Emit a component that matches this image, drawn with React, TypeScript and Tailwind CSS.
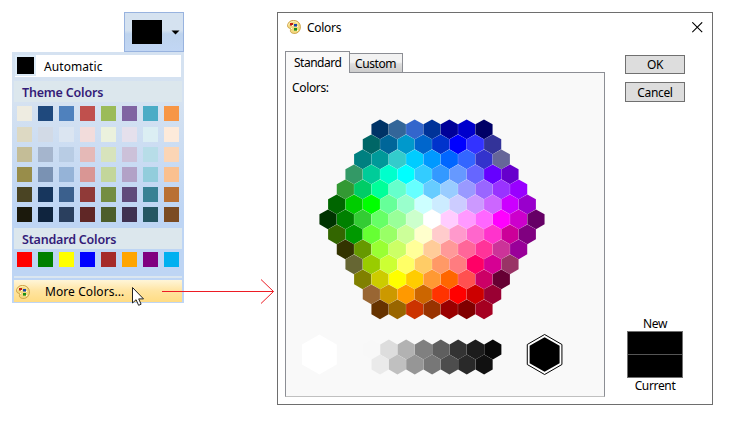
import React from 'react';

const THEME: string[][] = [
  ['#eeece1', '#1f497d', '#4f81bd', '#c0504d', '#9bbb59', '#8064a2', '#4bacc6', '#f79646'],
  ['#ddd9c3', '#d2dae6', '#dbe5f1', '#f2dcdb', '#ebf1dd', '#e5e0ec', '#dbeef3', '#fdeada'],
  ['#c4bd97', '#a5b5cd', '#b8cce4', '#e5b9b7', '#d7e3bc', '#ccc1d9', '#b7dde8', '#fbd5b5'],
  ['#988d4a', '#7a92b3', '#95b3d7', '#d99694', '#c3d69b', '#b2a2c7', '#92cddc', '#fac08f'],
  ['#4a4423', '#17365d', '#3b608d', '#903a38', '#748d42', '#604a7b', '#388194', '#b97034'],
  ['#1b190c', '#0f243e', '#2a3f5e', '#602726', '#4d5e2c', '#403152', '#255663', '#7b4b23'],
];

const STANDARD = ['#ff0000', '#008000', '#ffff00', '#0000ff', '#a52a2a', '#ffa500', '#800080', '#00b0f0'];

const HONEYCOMB = [
  '003366 336699 3366cc 003399 000099 0000cc 000066',
  '006666 006699 0099cc 0066cc 0033cc 0000ff 3333ff 333399',
  '008080 009999 33cccc 00ccff 0099ff 0066ff 3366ff 3333cc 666699',
  '339966 00cc99 00ffcc 00ffff 33ccff 3399ff 6699ff 6666ff 6600ff 6600cc',
  '339933 00cc66 00ff99 66ffcc 66ffff 66ccff 99ccff 9999ff 9966ff 9933ff 9900ff',
  '006600 00cc00 00ff00 66ff99 99ffcc ccffff ccecff ccccff cc99ff cc66ff cc00ff 9900cc',
  '003300 008000 33cc33 66ff66 99ff99 ccffcc ffffff ffccff ff99ff ff66ff ff00ff cc00cc 660066',
  '336600 009900 66ff33 99ff66 ccff99 ffffcc ffcccc ff99cc ff66cc ff33cc cc0099 800080',
  '333300 669900 99ff33 ccff66 ffff99 ffcc99 ff9999 ff6699 ff3399 cc3399 990099',
  '666633 99cc00 ccff33 ffff66 ffcc66 ff9966 ff7c80 ff0066 d60093 993366',
  '808000 cccc00 ffff00 ffcc00 ff9933 ff6600 ff5050 cc0066 660033',
  '996633 cc9900 ff9900 cc6600 ff3300 ff0000 cc0000 990033',
  '663300 996600 cc3300 993300 990000 800000 a50021',
].map((row) => row.split(' '));

const GRAYS = [
  'f8f8f8 dddddd b2b2b2 808080 5f5f5f 333333 1c1c1c 080808',
  'eaeaea c0c0c0 969696 777777 4d4d4d 292929 111111',
].map((row) => row.split(' '));

const PITCH = 17.33;

function hex(cx: number, cy: number, r: number) {
  const w = r * 0.8667;
  return [
    [cx, cy - r],
    [cx + w, cy - r / 2],
    [cx + w, cy + r / 2],
    [cx, cy + r],
    [cx - w, cy + r / 2],
    [cx - w, cy - r / 2],
  ]
    .map((p) => p.map((n) => n.toFixed(2)).join(','))
    .join(' ');
}

function Cells({ rows, cx, cy }: { rows: string[][]; cx: number[]; cy: number }) {
  return (
    <>
      {rows.map((row, r) =>
        row.map((c, i) => (
          <polygon key={`${r}-${i}`} points={hex(cx[r] + i * PITCH, cy + r * 15, 9.9)} fill={`#${c}`} />
        )),
      )}
    </>
  );
}

function Palette({ className }: { className: string }) {
  return (
    <svg viewBox="0 0 14 14" className={className}>
      <path
        d="M4.500.6C7-.1 10 .6 11.800 2.600c1.900 2.200 2.100 5.400.8 7.800-1.200 2.300-3.700 3.400-6.200 3-1.800-.3-3.200-1.300-3-2.700.1-1 .7-1.600.2-2C3 8.200 1.300 8.300.7 6.700 0 4.500 1.900 1.300 4.500.6Z"
        fill="#f3d97f"
        stroke="#c4963a"
        strokeWidth="0.8"
      />
      <path d="M1.500 5.500C1.700 3.400 3.500 1.700 6 1.600c2-.1 3.800.6 5 2" fill="none" stroke="#fff0b8" strokeWidth="1" />
      <rect x="3" y="3" width="3" height="2.500" fill="#c01f16" />
      <rect x="7" y="4" width="3" height="2.500" fill="#1844ac" />
      <rect x="7" y="8" width="3" height="2.600" fill="#1d8f16" />
      <path d="M5 5h1v1H5zM4 8h1v1H4z" fill="#fffbe6" />
      <path d="M10 6h1v1h-1zM10 10h1v1h-1z" fill="#fffbe6" />
    </svg>
  );
}

function Swatches({ colors }: { colors: string[] }) {
  return (
    <div className="flex gap-[6px] pl-[5px]">
      {colors.map((c) => (
        <div key={c} className="h-[15px] w-[15px]" style={{ backgroundColor: c }} />
      ))}
    </div>
  );
}

function Heading({ children }: { children: React.ReactNode }) {
  return (
    <div className="mx-[2px] h-[21px] bg-[#dce7ed] pl-2 text-[12.5px] leading-[24px] font-semibold tracking-[-0.2px] text-[#341c78]">
      {children}
    </div>
  );
}

function ColorMenu() {
  return (
    <div className="flex w-[172px] flex-col pt-3">
      <div className="flex h-10 w-[60px] items-center self-end border border-[#98b3df] bg-linear-to-b from-[#d5e2f0] from-45% via-[#bed3ed] via-55% to-[#c1d6f4] pl-[7px]">
        <div className="h-6 w-[30px] bg-black" />
        <svg className="ml-[9px] h-[5px] w-[9px]" viewBox="0 0 9 5">
          <path d="M.5.500h8l-4 4Z" fill="#000" />
        </svg>
      </div>
      <div className="flex h-[251px] flex-col bg-linear-to-b from-[#d5e2f1] from-20% to-[#bed5f4] to-65%">
        <div className="mx-[3px] mt-[3px] flex h-[22px] bg-white">
          <div className="h-[21px] w-[21px] bg-[#dcebf8] pt-[2px] pl-[2px]">
            <div className="h-[17px] w-[17px] bg-black" />
          </div>
          <span className="pl-2 leading-[24px] tracking-[0.08px]">Automatic</span>
        </div>
        <div className="pt-1">
          <Heading>Theme Colors</Heading>
        </div>
        <div className="pt-1">
          <Swatches colors={THEME[0]} />
        </div>
        <div className="flex flex-col gap-[5px] pt-[6px]">
          {THEME.slice(1).map((row) => (
            <Swatches key={row[0]} colors={row} />
          ))}
        </div>
        <div className="pt-[6px] pb-[3px]">
          <Heading>Standard Colors</Heading>
        </div>
        <Swatches colors={STANDARD} />
        <div className="mx-[2px] mt-[9px] h-[2px] bg-[#dae6f0]" />
        <div className="mx-[2px] mt-[2px] flex h-[22px] items-start bg-linear-to-b from-[#fff5d8] via-[#ffe4a0] via-50% to-[#ffdc83] pl-[2px]">
          <Palette className="mt-[5px] h-[14px] w-[14px]" />
          <span className="pl-[15px] leading-[24px] tracking-[0.08px]">More Colors...</span>
        </div>
      </div>
    </div>
  );
}

function StandardPane() {
  return (
    <div className="flex h-[325px] w-[320px] flex-col border border-[#8c8e94] border-b-[#c0c0c0] bg-[#f9f9f9]">
      <div className="pt-[7px] pl-[6px] leading-4 tracking-[-0.35px]">Colors:</div>
      <svg className="h-[300px] w-[318px]" viewBox="286 96 318 300">
        <Cells rows={HONEYCOMB} cx={HONEYCOMB.map((r) => 432 - ((r.length - 1) * PITCH) / 2)} cy={129.3} />
        <Cells rows={GRAYS} cx={[371.5, 380.1]} cy={349.5} />
        <polygon points={hex(319.4, 354.5, 20)} fill="#fff" />
        <polygon points={hex(544.6, 354.5, 20)} fill="#fff" stroke="#000" strokeWidth="1" />
        <polygon points={hex(544.6, 354.5, 17.3)} fill="#000" />
      </svg>
    </div>
  );
}

function ColorsDialog() {
  return (
    <div className="mt-3 ml-[93px] flex h-[393px] w-[436px] flex-col border border-[#6e6e6e] bg-white">
      <div className="flex h-[38px] items-start pt-[7px] pr-[9px] pl-[9px]">
        <Palette className="h-[14px] w-[14px]" />
        <span className="grow pl-[6px] leading-4 tracking-[-0.3px]">Colors</span>
        <svg className="mt-[2px] h-[11px] w-[11px]" viewBox="0 0 11 11">
          <path d="M.3.300l9.900 9.900M10.200.300l-9.900 9.900" stroke="#000" strokeWidth="1.1" />
        </svg>
      </div>
      <div className="flex pl-[7px]">
        <div className="flex flex-col">
          <div className="z-10 -mb-px flex items-end">
            <div className="h-[22px] w-[65px] border border-b-0 border-[#8c8e94] bg-[#f9f9f9] pl-2 leading-[22px] tracking-[-0.5px]">
              Standard
            </div>
            <div className="-ml-px h-5 w-[54px] border border-[#8c8e94] bg-linear-to-b from-[#f2f2f2] from-45% via-[#dedede] via-55% to-[#cdcdcd] pl-[5px] leading-[20px] tracking-[-0.4px]">
              Custom
            </div>
          </div>
          <StandardPane />
        </div>
        <div className="ml-5 flex w-[60px] flex-col items-center pt-1 tracking-[-0.35px]">
          <div className="h-[19px] w-[60px] border border-[#707070] bg-[#ddd] text-center leading-[18px]">OK</div>
          <div className="mt-2 h-5 w-[60px] border border-[#707070] bg-[#ddd] text-center leading-[20px]">Cancel</div>
          <div className="mt-[214px] h-[15px] leading-4">New</div>
          <div className="flex h-[47px] w-[56px] flex-col border border-[#707070] bg-black">
            <div className="h-[23px] border-b border-[#555]" />
          </div>
          <div className="leading-4">Current</div>
        </div>
      </div>
    </div>
  );
}

export default function App() {
  return (
    <div className="relative flex h-[422px] w-[731px] items-start overflow-hidden bg-white pl-3 font-['Noto_Sans','Open_Sans',sans-serif] text-[12px] whitespace-nowrap text-black">
      <ColorMenu />
      <ColorsDialog />
      <svg className="absolute top-[276px] left-[130px] h-8 w-[146px]" viewBox="130 276 146 32">
        <path d="M162 291.500H273.500M261 279.500l12.500 12-12.500 12" fill="none" stroke="#ed1c24" strokeWidth="1" />
        <path
          d="M132.500 287.500v15.500l3.600-3.300 2.500 5.600 2.500-1.100-2.400-5.300h4.800Z"
          fill="#fff"
          stroke="#222"
          strokeWidth="1"
        />
      </svg>
    </div>
  );
}
